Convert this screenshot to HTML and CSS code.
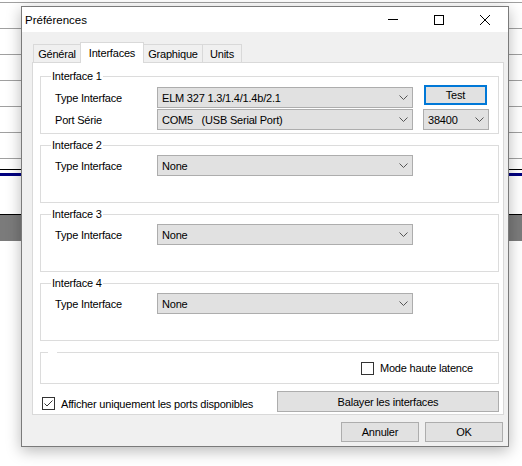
FILE: index.html
```html
<!DOCTYPE html>
<html lang="fr">
<head>
<meta charset="utf-8">
<title>Préférences</title>
<link rel="stylesheet" href="styles.css">
</head>
<body>
<div class="desk">
  <div class="gl first"></div>
  <div class="gl"></div>
  <div class="gl"></div>
  <div class="gl"></div>
  <div class="gl"></div>
  <div class="gl"></div>
  <div class="gl"></div>
  <div class="bl b1"></div>
  <div class="navy"></div>
  <div class="bl b2"></div>
  <div class="grayband"></div>
</div>

<div class="dialog">
  <div class="titlebar">
    <span class="title">Préférences</span>
    <div class="wctrls">
      <span class="wbtn"><svg width="10" height="1" viewBox="0 0 10 1"><line x1="0" y1="0.5" x2="10" y2="0.5" stroke="#000" stroke-width="1"/></svg></span>
      <span class="wbtn"><svg width="10" height="10" viewBox="0 0 10 10"><rect x="0.5" y="0.5" width="9" height="9" fill="none" stroke="#000" stroke-width="1"/></svg></span>
      <span class="wbtn"><svg width="10" height="10" viewBox="0 0 10 10"><path d="M0 0 L10 10 M10 0 L0 10" stroke="#000" stroke-width="1" fill="none"/></svg></span>
    </div>
  </div>

  <div class="dbody">
    <div class="tabs">
      <div class="tab t-gen">Général</div>
      <div class="tab sel t-int">Interfaces</div>
      <div class="tab t-gra">Graphique</div>
      <div class="tab t-uni">Units</div>
    </div>

    <div class="panel">
      <div class="group g1">
        <span class="legend">Interface 1</span>
        <div class="grid">
          <span class="lbl">Type Interface</span>
          <div class="combo"><span>ELM 327 1.3/1.4/1.4b/2.1</span><svg class="chev" width="9" height="5" viewBox="0 0 9 5"><polyline points="0.5,0.5 4.5,4.5 8.5,0.5" fill="none" stroke="#555" stroke-width="1"/></svg></div>
          <div class="btn test">Test</div>
          <span class="lbl">Port Série</span>
          <div class="combo"><span>COM5&nbsp;&nbsp;&nbsp;(USB Serial Port)</span><svg class="chev" width="9" height="5" viewBox="0 0 9 5"><polyline points="0.5,0.5 4.5,4.5 8.5,0.5" fill="none" stroke="#555" stroke-width="1"/></svg></div>
          <div class="combo small"><span>38400</span><svg class="chev" width="9" height="5" viewBox="0 0 9 5"><polyline points="0.5,0.5 4.5,4.5 8.5,0.5" fill="none" stroke="#555" stroke-width="1"/></svg></div>
        </div>
      </div>

      <div class="group">
        <span class="legend">Interface 2</span>
        <div class="grid">
          <span class="lbl">Type Interface</span>
          <div class="combo"><span>None</span><svg class="chev" width="9" height="5" viewBox="0 0 9 5"><polyline points="0.5,0.5 4.5,4.5 8.5,0.5" fill="none" stroke="#555" stroke-width="1"/></svg></div>
        </div>
      </div>

      <div class="group">
        <span class="legend">Interface 3</span>
        <div class="grid">
          <span class="lbl">Type Interface</span>
          <div class="combo"><span>None</span><svg class="chev" width="9" height="5" viewBox="0 0 9 5"><polyline points="0.5,0.5 4.5,4.5 8.5,0.5" fill="none" stroke="#555" stroke-width="1"/></svg></div>
        </div>
      </div>

      <div class="group">
        <span class="legend">Interface 4</span>
        <div class="grid">
          <span class="lbl">Type Interface</span>
          <div class="combo"><span>None</span><svg class="chev" width="9" height="5" viewBox="0 0 9 5"><polyline points="0.5,0.5 4.5,4.5 8.5,0.5" fill="none" stroke="#555" stroke-width="1"/></svg></div>
        </div>
      </div>

      <div class="group g5">
        <span class="notch"></span>
        <label class="check">
          <span class="box"></span>
          <span>Mode haute latence</span>
        </label>
      </div>

      <div class="bottomrow">
        <label class="check ports">
          <span class="box"><svg width="11" height="11" viewBox="0 0 11 11"><polyline points="1.5,5.5 4,8 9.5,2.5" fill="none" stroke="#333" stroke-width="1"/></svg></span>
          <span>Afficher uniquement les ports disponibles</span>
        </label>
        <div class="btn scan">Balayer les interfaces</div>
      </div>
    </div>

    <div class="actions">
      <div class="btn act">Annuler</div>
      <div class="btn act">OK</div>
    </div>
  </div>
</div>
</body>
</html>
```

FILE: styles.css
```css
html, body {
  margin: 0;
  padding: 0;
  background: #ffffff;
  width: 522px;
  height: 466px;
  overflow: hidden;
}

body {
  font-family: "Liberation Sans", Arial, sans-serif;
  font-size: 11px;
  letter-spacing: -0.2px;
  color: #000;
}

/* desktop background behind the dialog */
.desk {
  width: 522px;
}
.gl {
  height: 1px;
  background: #a0a0a0;
  margin-top: 25px;
}
.gl.first {
  margin-top: 2px;
}
.bl {
  height: 1px;
  background: #000;
}
.b1 { margin-top: 10px; }
.navy {
  height: 3px;
  background: #000080;
  margin-top: 3px;
}
.b2 { margin-top: 38px; }
.grayband {
  height: 26px;
  background: #7b7b7b;
}

/* dialog window */
.dialog {
  position: absolute;
  left: 21px;
  top: 6px;
  width: 488px;
  height: 441px;
  box-sizing: border-box;
  border: 1px solid #7a7a7a;
  background: #f0f0f0;
  box-shadow: 0 4px 14px rgba(0, 0, 0, 0.28);
  display: flex;
  flex-direction: column;
}

.titlebar {
  height: 25px;
  background: #ffffff;
  display: flex;
  align-items: center;
  justify-content: space-between;
}
.title {
  padding-left: 3px;
  font-size: 11.5px;
  letter-spacing: 0;
}
.wctrls {
  display: flex;
  height: 100%;
}
.wbtn {
  width: 46px;
  height: 100%;
  display: flex;
  align-items: center;
  justify-content: center;
}
.wbtn svg { display: block; }

.dbody {
  padding: 10px 5px 4px 10px;
  display: flex;
  flex-direction: column;
}

/* tabs */
.tabs {
  display: flex;
  align-items: flex-end;
  height: 20px;
  padding-left: 1px;
  position: relative;
  z-index: 1;
}
.tab {
  box-sizing: border-box;
  height: 18px;
  border: 1px solid #d9d9d9;
  border-bottom: none;
  background: #f0f0f0;
  display: flex;
  align-items: center;
  justify-content: center;
  margin-left: -1px;
}
.tab:first-child { margin-left: 0; }
.tab.sel {
  height: 21px;
  margin-bottom: -1px;
  background: #ffffff;
  padding-bottom: 1px;
}
.t-gen { width: 48px; }
.t-int { width: 64px; }
.t-gra { width: 60px; }
.t-uni { width: 40px; }

.panel {
  box-sizing: border-box;
  width: 472px;
  height: 353px;
  background: #ffffff;
  border: 1px solid #d9d9d9;
  padding: 13px 4px 2px 7px;
  display: flex;
  flex-direction: column;
  gap: 11px;
}

/* group boxes */
.group {
  position: relative;
  box-sizing: border-box;
  height: 58px;
  border: 1px solid #dcdcdc;
  padding: 9px 0 0 14px;
  flex: none;
}
.group.g1 { padding-top: 10px; }
.legend {
  position: absolute;
  top: -7px;
  left: 10px;
  line-height: 13px;
  padding: 0 1px;
  background: #ffffff;
}
.notch {
  position: absolute;
  top: -2px;
  left: 7px;
  width: 9px;
  height: 3px;
  background: #ffffff;
}

.grid {
  display: grid;
  grid-template-columns: 92px 256px 66px;
  grid-auto-rows: 21px;
  column-gap: 10px;
  row-gap: 1px;
  align-items: center;
}
.lbl {
  align-self: center;
}

.combo {
  box-sizing: border-box;
  height: 21px;
  border: 1px solid #adadad;
  background: #e1e1e1;
  display: flex;
  align-items: center;
  justify-content: space-between;
  padding: 0 4px 0 4px;
  white-space: nowrap;
}
.chev { display: block; flex: none; }

.btn {
  box-sizing: border-box;
  border: 1px solid #adadad;
  background: #e1e1e1;
  display: flex;
  align-items: center;
  justify-content: center;
  height: 20px;
}
.btn.test {
  width: 63px;
  height: 20px;
  margin-left: 1px;
  border: 2px solid #0078d7;
  align-self: start;
  margin-top: -2px;
}

.g5 {
  height: 32px;
  padding: 0 25px 0 0;
  display: flex;
  align-items: center;
  justify-content: flex-end;
}

.check {
  display: flex;
  align-items: center;
  gap: 6px;
}
.box {
  box-sizing: border-box;
  width: 13px;
  height: 13px;
  border: 1px solid #333333;
  background: #ffffff;
  display: flex;
  align-items: center;
  justify-content: center;
  flex: none;
}
.box svg { display: block; }

.bottomrow {
  display: flex;
  justify-content: space-between;
  align-items: flex-start;
  height: 21px;
  margin-top: -4px;
}
.ports {
  margin-left: 2px;
  padding-top: 6px;
}
.btn.scan {
  width: 222px;
  height: 21px;
}

.actions {
  display: flex;
  justify-content: flex-end;
  gap: 6px;
  margin-top: 7px;
}
.btn.act {
  width: 78px;
  height: 20px;
}
```
